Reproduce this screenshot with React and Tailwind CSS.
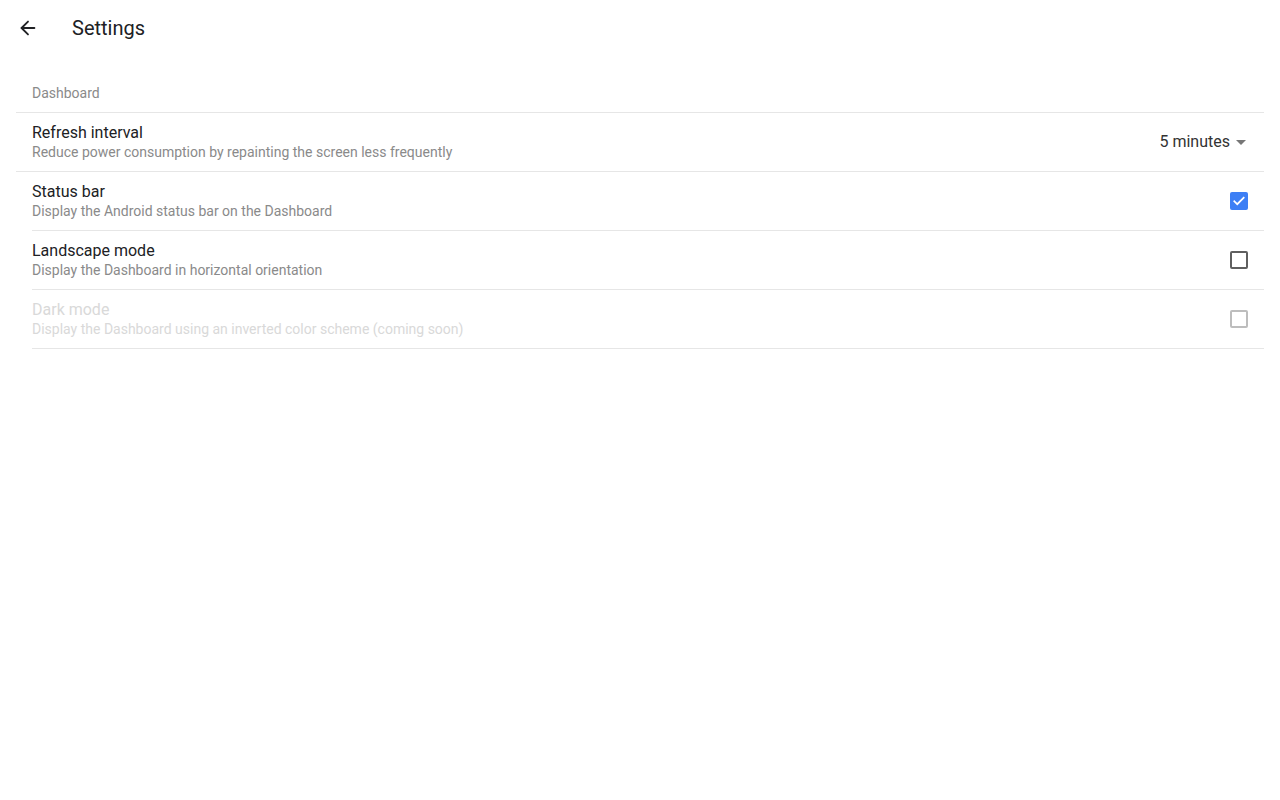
import { ArrowLeft } from "lucide-react";

const rows = [
  { title: "Status bar", desc: "Display the Android status bar on the Dashboard", checked: true },
  { title: "Landscape mode", desc: "Display the Dashboard in horizontal orientation", checked: false },
  { title: "Dark mode", desc: "Display the Dashboard using an inverted color scheme (coming soon)", checked: false, disabled: true },
];

function Checkbox({ checked, disabled }) {
  if (checked) {
    return (
      <div className="w-[18px] h-[18px] rounded-[2px] bg-[#3d7ff5] flex items-center justify-center">
        <svg width="14" height="14" viewBox="0 0 24 24" fill="none" stroke="white" strokeWidth="3" strokeLinecap="square">
          <path d="M4 12.5l5 5L20 6.5" />
        </svg>
      </div>
    );
  }
  return (
    <div
      className={`w-[18px] h-[18px] rounded-[2px] border-2 ${disabled ? "border-[#bdbdbd]" : "border-[#5f5f5f]"}`}
    />
  );
}

export default function App() {
  return (
    <div className="min-h-screen bg-white font-['Roboto',sans-serif] text-[#202124]">
      <div className="h-14 flex items-center pl-4">
        <button className="w-6 h-6 flex items-center justify-center text-[#202124]">
          <ArrowLeft size={22} strokeWidth={2} />
        </button>
        <h1 className="ml-8 text-[20px] text-[#202124]">Settings</h1>
      </div>

      <div className="pt-[28px] pr-4">
        <div className="pl-8 pb-[9px] text-[14px] text-[#8a8a8a] leading-[19px]">Dashboard</div>
        <div className="ml-4 border-t border-[#e6e6e6]" />

        <div className="h-[58px] flex items-center pl-8 pr-4">
          <div className="flex-1">
            <div className="text-[16px] leading-[20px]">Refresh interval</div>
            <div className="text-[14px] leading-[19px] text-[#8a8a8a]">Reduce power consumption by repainting the screen less frequently</div>
          </div>
          <div className="flex items-center gap-[6px] text-[16px] text-[#333]">
            <span>5 minutes</span>
            <svg width="10" height="5" viewBox="0 0 10 5" className="mr-[2px]">
              <path d="M0 0h10L5 5z" fill="#777" />
            </svg>
          </div>
        </div>
        <div className="ml-4 border-t border-[#e6e6e6]" />

        {rows.map((r) => (
          <div key={r.title}>
            <div className="h-[58px] flex items-center pl-8 pr-4">
              <div className="flex-1">
                <div className={`text-[16px] leading-[20px] ${r.disabled ? "text-[#d9d9d9]" : ""}`}>{r.title}</div>
                <div className={`text-[14px] leading-[19px] ${r.disabled ? "text-[#d9d9d9]" : "text-[#8a8a8a]"}`}>{r.desc}</div>
              </div>
              <Checkbox checked={r.checked} disabled={r.disabled} />
            </div>
            <div className="ml-8 border-t border-[#e6e6e6]" />
          </div>
        ))}
      </div>
    </div>
  );
}
